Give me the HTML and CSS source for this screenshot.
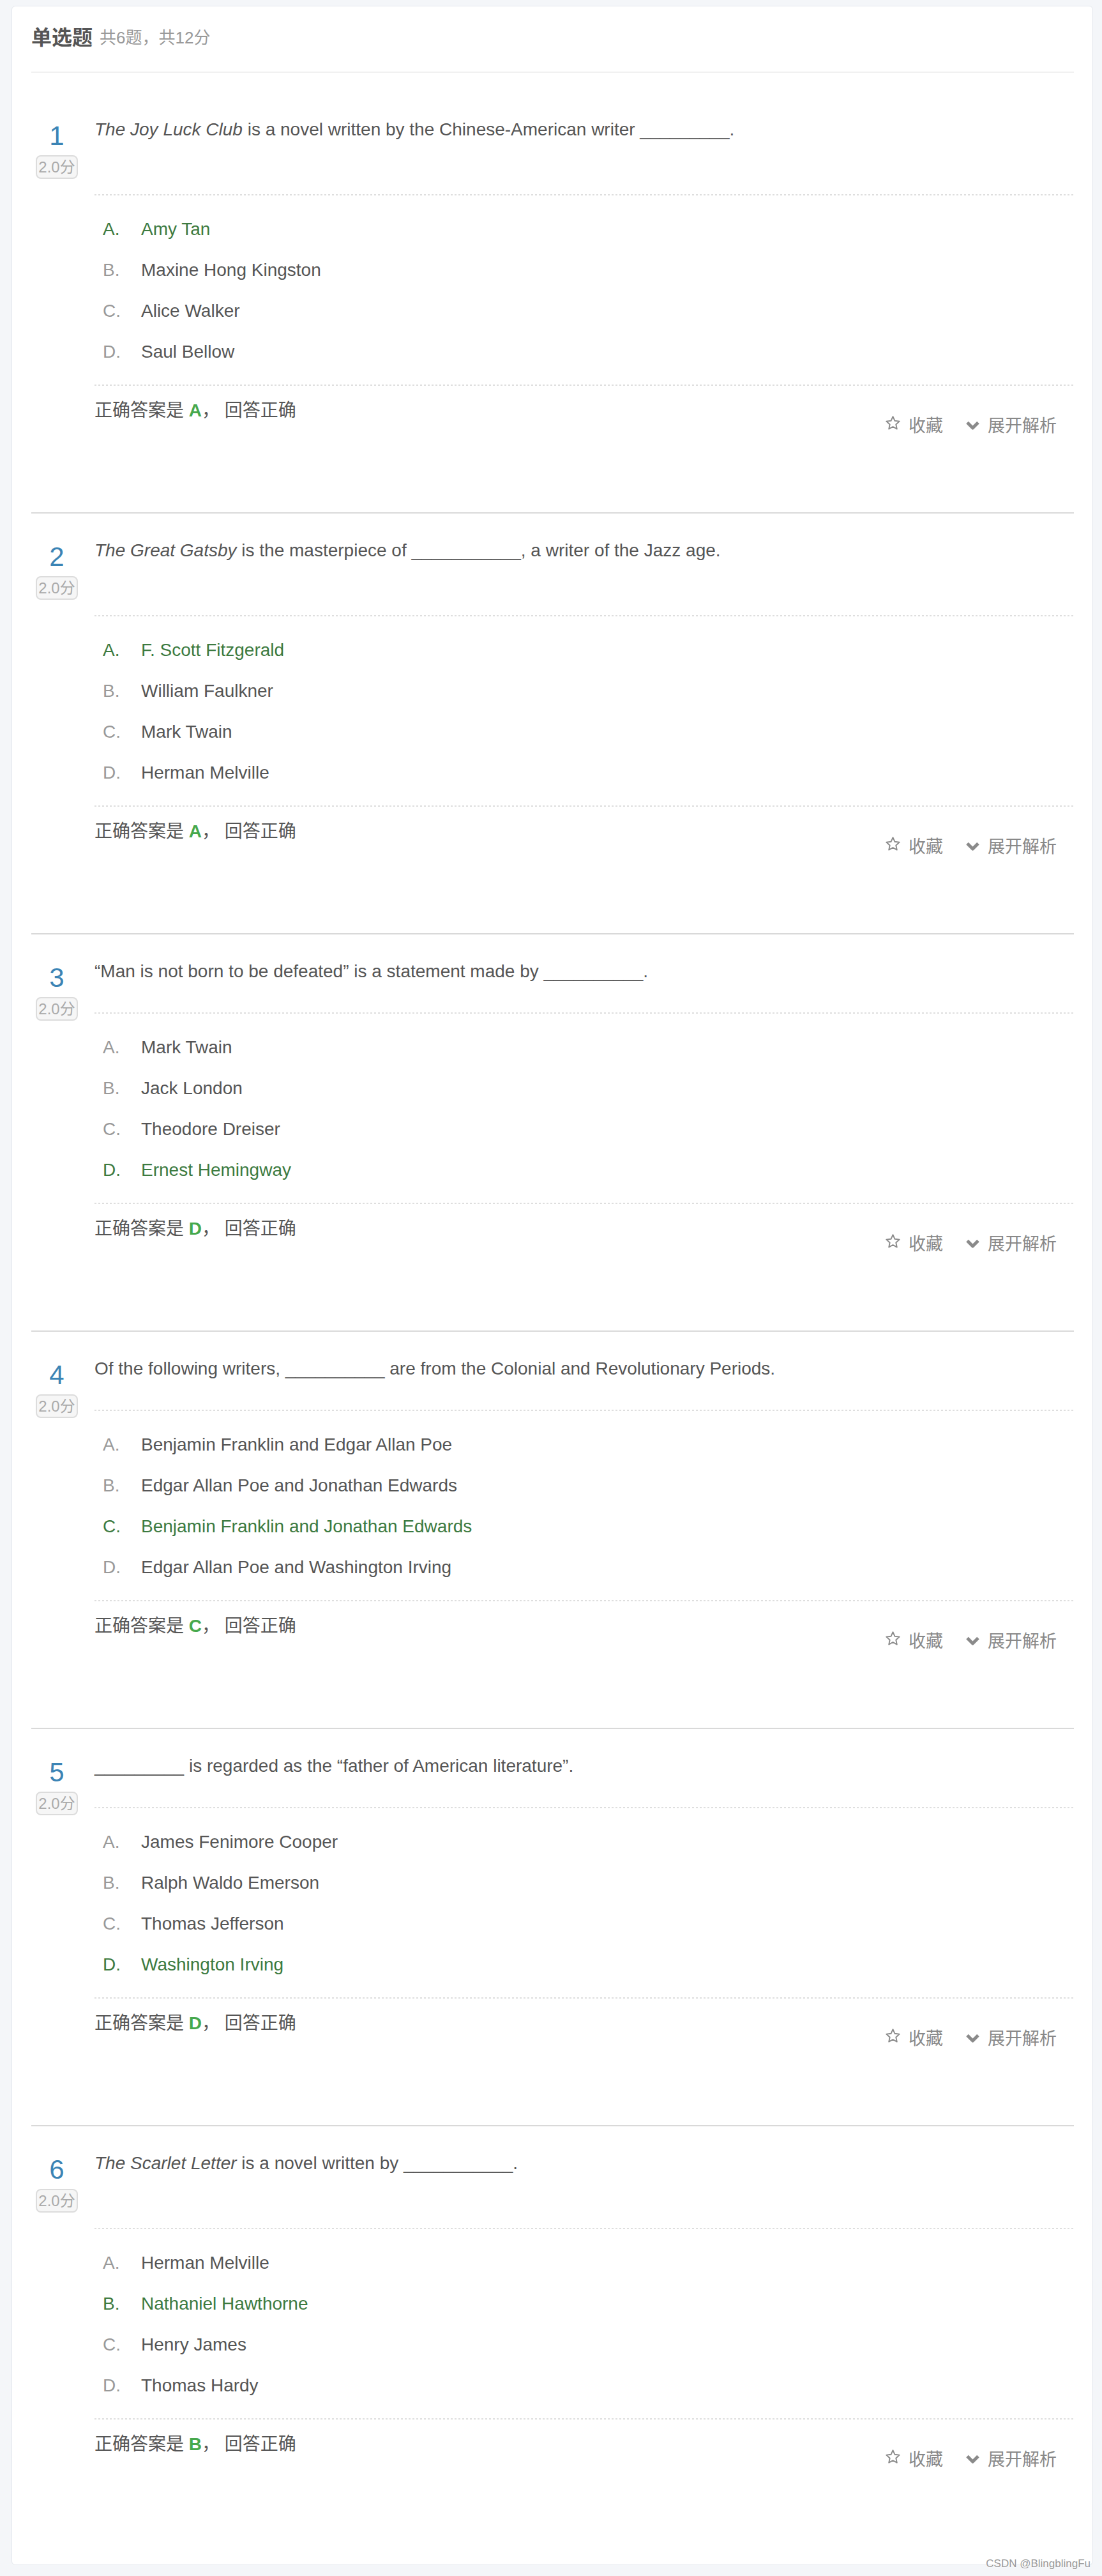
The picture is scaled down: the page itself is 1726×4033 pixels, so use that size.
FILE: index.html
```html
<!DOCTYPE html>
<html lang="zh-CN">
<head>
<meta charset="utf-8">
<title>单选题</title>
<link rel="stylesheet" href="styles.css">
</head>
<body>
<div class="card">
  <div class="sec-head"><span class="sec-title">单选题</span><span class="sec-sub">共6题，共12分</span></div>
  <div class="q-list">

    <div class="question">
      <div class="q-index"><div class="q-num">1</div><div class="q-score">2.0分</div></div>
      <div class="q-body">
        <div class="q-title long"><i>The Joy Luck Club</i> is a novel written by the Chinese-American writer _________.</div>
        <ul class="q-options">
          <li class="right"><span class="opt-key">A.</span><span>Amy Tan</span></li>
          <li><span class="opt-key">B.</span><span>Maxine Hong Kingston</span></li>
          <li><span class="opt-key">C.</span><span>Alice Walker</span></li>
          <li><span class="opt-key">D.</span><span>Saul Bellow</span></li>
        </ul>
        <div class="q-foot">
          <div class="q-answer">正确答案是 <b>A</b>， 回答正确</div>
          <div class="q-actions">
            <span class="act"><svg class="ico-star" viewBox="0 0 25 25" width="25" height="25"><path d="M12.5 2.2l3 6.6 7.2.8-5.4 4.9 1.5 7.1-6.3-3.6-6.3 3.6 1.5-7.1-5.4-4.9 7.2-.8z" fill="none" stroke="#8a8a8a" stroke-width="1.9" stroke-linejoin="round"/></svg>收藏</span>
            <span class="act act-expand"><svg class="ico-chev" viewBox="0 0 23 16" width="23" height="16"><path d="M3 4.5l8.5 8.5 8.5-8.5" fill="none" stroke="#8a8a8a" stroke-width="5" stroke-linejoin="round"/></svg>展开解析</span>
          </div>
        </div>
      </div>
    </div>

    <div class="question">
      <div class="q-index"><div class="q-num">2</div><div class="q-score">2.0分</div></div>
      <div class="q-body">
        <div class="q-title long"><i>The Great Gatsby</i> is the masterpiece of ___________, a writer of the Jazz age.</div>
        <ul class="q-options">
          <li class="right"><span class="opt-key">A.</span><span>F. Scott Fitzgerald</span></li>
          <li><span class="opt-key">B.</span><span>William Faulkner</span></li>
          <li><span class="opt-key">C.</span><span>Mark Twain</span></li>
          <li><span class="opt-key">D.</span><span>Herman Melville</span></li>
        </ul>
        <div class="q-foot">
          <div class="q-answer">正确答案是 <b>A</b>， 回答正确</div>
          <div class="q-actions">
            <span class="act"><svg class="ico-star" viewBox="0 0 25 25" width="25" height="25"><path d="M12.5 2.2l3 6.6 7.2.8-5.4 4.9 1.5 7.1-6.3-3.6-6.3 3.6 1.5-7.1-5.4-4.9 7.2-.8z" fill="none" stroke="#8a8a8a" stroke-width="1.9" stroke-linejoin="round"/></svg>收藏</span>
            <span class="act act-expand"><svg class="ico-chev" viewBox="0 0 23 16" width="23" height="16"><path d="M3 4.5l8.5 8.5 8.5-8.5" fill="none" stroke="#8a8a8a" stroke-width="5" stroke-linejoin="round"/></svg>展开解析</span>
          </div>
        </div>
      </div>
    </div>

    <div class="question">
      <div class="q-index"><div class="q-num">3</div><div class="q-score">2.0分</div></div>
      <div class="q-body">
        <div class="q-title">“Man is not born to be defeated” is a statement made by __________.</div>
        <ul class="q-options">
          <li><span class="opt-key">A.</span><span>Mark Twain</span></li>
          <li><span class="opt-key">B.</span><span>Jack London</span></li>
          <li><span class="opt-key">C.</span><span>Theodore Dreiser</span></li>
          <li class="right"><span class="opt-key">D.</span><span>Ernest Hemingway</span></li>
        </ul>
        <div class="q-foot">
          <div class="q-answer">正确答案是 <b>D</b>， 回答正确</div>
          <div class="q-actions">
            <span class="act"><svg class="ico-star" viewBox="0 0 25 25" width="25" height="25"><path d="M12.5 2.2l3 6.6 7.2.8-5.4 4.9 1.5 7.1-6.3-3.6-6.3 3.6 1.5-7.1-5.4-4.9 7.2-.8z" fill="none" stroke="#8a8a8a" stroke-width="1.9" stroke-linejoin="round"/></svg>收藏</span>
            <span class="act act-expand"><svg class="ico-chev" viewBox="0 0 23 16" width="23" height="16"><path d="M3 4.5l8.5 8.5 8.5-8.5" fill="none" stroke="#8a8a8a" stroke-width="5" stroke-linejoin="round"/></svg>展开解析</span>
          </div>
        </div>
      </div>
    </div>

    <div class="question">
      <div class="q-index"><div class="q-num">4</div><div class="q-score">2.0分</div></div>
      <div class="q-body">
        <div class="q-title">Of the following writers, __________ are from the Colonial and Revolutionary Periods.</div>
        <ul class="q-options">
          <li><span class="opt-key">A.</span><span>Benjamin Franklin and Edgar Allan Poe</span></li>
          <li><span class="opt-key">B.</span><span>Edgar Allan Poe and Jonathan Edwards</span></li>
          <li class="right"><span class="opt-key">C.</span><span>Benjamin Franklin and Jonathan Edwards</span></li>
          <li><span class="opt-key">D.</span><span>Edgar Allan Poe and Washington Irving</span></li>
        </ul>
        <div class="q-foot">
          <div class="q-answer">正确答案是 <b>C</b>， 回答正确</div>
          <div class="q-actions">
            <span class="act"><svg class="ico-star" viewBox="0 0 25 25" width="25" height="25"><path d="M12.5 2.2l3 6.6 7.2.8-5.4 4.9 1.5 7.1-6.3-3.6-6.3 3.6 1.5-7.1-5.4-4.9 7.2-.8z" fill="none" stroke="#8a8a8a" stroke-width="1.9" stroke-linejoin="round"/></svg>收藏</span>
            <span class="act act-expand"><svg class="ico-chev" viewBox="0 0 23 16" width="23" height="16"><path d="M3 4.5l8.5 8.5 8.5-8.5" fill="none" stroke="#8a8a8a" stroke-width="5" stroke-linejoin="round"/></svg>展开解析</span>
          </div>
        </div>
      </div>
    </div>

    <div class="question">
      <div class="q-index"><div class="q-num">5</div><div class="q-score">2.0分</div></div>
      <div class="q-body">
        <div class="q-title">_________ is regarded as the “father of American literature”.</div>
        <ul class="q-options">
          <li><span class="opt-key">A.</span><span>James Fenimore Cooper</span></li>
          <li><span class="opt-key">B.</span><span>Ralph Waldo Emerson</span></li>
          <li><span class="opt-key">C.</span><span>Thomas Jefferson</span></li>
          <li class="right"><span class="opt-key">D.</span><span>Washington Irving</span></li>
        </ul>
        <div class="q-foot">
          <div class="q-answer">正确答案是 <b>D</b>， 回答正确</div>
          <div class="q-actions">
            <span class="act"><svg class="ico-star" viewBox="0 0 25 25" width="25" height="25"><path d="M12.5 2.2l3 6.6 7.2.8-5.4 4.9 1.5 7.1-6.3-3.6-6.3 3.6 1.5-7.1-5.4-4.9 7.2-.8z" fill="none" stroke="#8a8a8a" stroke-width="1.9" stroke-linejoin="round"/></svg>收藏</span>
            <span class="act act-expand"><svg class="ico-chev" viewBox="0 0 23 16" width="23" height="16"><path d="M3 4.5l8.5 8.5 8.5-8.5" fill="none" stroke="#8a8a8a" stroke-width="5" stroke-linejoin="round"/></svg>展开解析</span>
          </div>
        </div>
      </div>
    </div>

    <div class="question">
      <div class="q-index"><div class="q-num">6</div><div class="q-score">2.0分</div></div>
      <div class="q-body">
        <div class="q-title long"><i>The Scarlet Letter</i> is a novel written by ___________.</div>
        <ul class="q-options">
          <li><span class="opt-key">A.</span><span>Herman Melville</span></li>
          <li class="right"><span class="opt-key">B.</span><span>Nathaniel Hawthorne</span></li>
          <li><span class="opt-key">C.</span><span>Henry James</span></li>
          <li><span class="opt-key">D.</span><span>Thomas Hardy</span></li>
        </ul>
        <div class="q-foot">
          <div class="q-answer">正确答案是 <b>B</b>， 回答正确</div>
          <div class="q-actions">
            <span class="act"><svg class="ico-star" viewBox="0 0 25 25" width="25" height="25"><path d="M12.5 2.2l3 6.6 7.2.8-5.4 4.9 1.5 7.1-6.3-3.6-6.3 3.6 1.5-7.1-5.4-4.9 7.2-.8z" fill="none" stroke="#8a8a8a" stroke-width="1.9" stroke-linejoin="round"/></svg>收藏</span>
            <span class="act act-expand"><svg class="ico-chev" viewBox="0 0 23 16" width="23" height="16"><path d="M3 4.5l8.5 8.5 8.5-8.5" fill="none" stroke="#8a8a8a" stroke-width="5" stroke-linejoin="round"/></svg>展开解析</span>
          </div>
        </div>
      </div>
    </div>

  </div>
  <div class="watermark">CSDN @BlingblingFu</div>
</div>
</body>
</html>
```
FILE: styles.css
```css
* {
  box-sizing: border-box;
}

html,
body {
  margin: 0;
}

body {
  background: #f4f6f9;
  padding: 9px 14px 18px 18px;
  font-family: "Liberation Sans", "Noto Sans CJK SC", sans-serif;
  color: #555;
}

.card {
  position: relative;
  background: #fff;
  border: 1px solid #e3e7ed;
  border-radius: 6px;
  padding: 0 29px 29px 30px;
}

.sec-head {
  display: flex;
  align-items: center;
  height: 104px;
  padding-bottom: 4px;
  border-bottom: 2px solid #f1f1f1;
}

.sec-title {
  font-size: 32px;
  line-height: 40px;
  font-weight: bold;
  color: #555;
}

.sec-sub {
  margin-left: 11px;
  font-size: 26px;
  line-height: 40px;
  color: #999;
}

.question {
  display: flex;
  border-top: 2px solid #d9d9d9;
  padding: 38px 0 115px;
}

.question:first-child {
  border-top: 0;
  padding-top: 69px;
}

.q-index {
  flex: none;
  width: 80px;
  margin-right: 19px;
  display: flex;
  flex-direction: column;
  align-items: center;
}

.q-num {
  font-size: 42px;
  line-height: 60px;
  color: #3b84b5;
}

.q-score {
  font-size: 24px;
  line-height: 33px;
  padding: 0 2px;
  border: 2px solid #dcdcdc;
  border-radius: 8px;
  background: #f6f6f6;
  color: #aaa;
}

.q-body {
  flex: 1;
  min-width: 0;
}

.q-title {
  font-size: 28px;
  line-height: 40px;
  margin-bottom: 44px;
  color: #555;
}

.q-title.long {
  margin-bottom: 81px;
}

.q-options {
  list-style: none;
  margin: 0;
  padding: 23px 0 21px 13px;
  background-image: linear-gradient(90deg, #dedede 50%, transparent 50%), linear-gradient(90deg, #dedede 50%, transparent 50%);
  background-size: 6px 2px, 6px 2px;
  background-position: left top, left bottom;
  background-repeat: repeat-x;
}

.q-options li {
  display: flex;
  font-size: 28px;
  line-height: 64px;
  color: #555;
}

.opt-key {
  flex: none;
  width: 60px;
  color: #999;
}

.q-options li.right,
.q-options li.right .opt-key {
  color: #3c7a3f;
}

.q-foot {
  display: flex;
  justify-content: space-between;
  align-items: flex-start;
  padding-top: 19px;
}

.q-answer {
  font-size: 28px;
  line-height: 40px;
  color: #555;
}

.q-answer b {
  color: #46a84c;
}

.q-actions {
  display: flex;
  align-items: center;
  margin-top: 24px;
  padding-right: 27px;
  font-size: 27px;
  line-height: 40px;
  color: #888;
}

.act {
  display: flex;
  align-items: center;
}

.act-expand {
  margin-left: 35px;
}

.ico-star {
  margin-right: 12px;
  margin-bottom: 10px;
}

.ico-chev {
  margin-right: 12px;
  margin-bottom: 4px;
}

.watermark {
  position: absolute;
  right: 3px;
  bottom: -9px;
  font-size: 17px;
  line-height: 20px;
  color: #999;
  text-shadow: 0 0 2px #fff, 0 0 2px #fff;
}
```
